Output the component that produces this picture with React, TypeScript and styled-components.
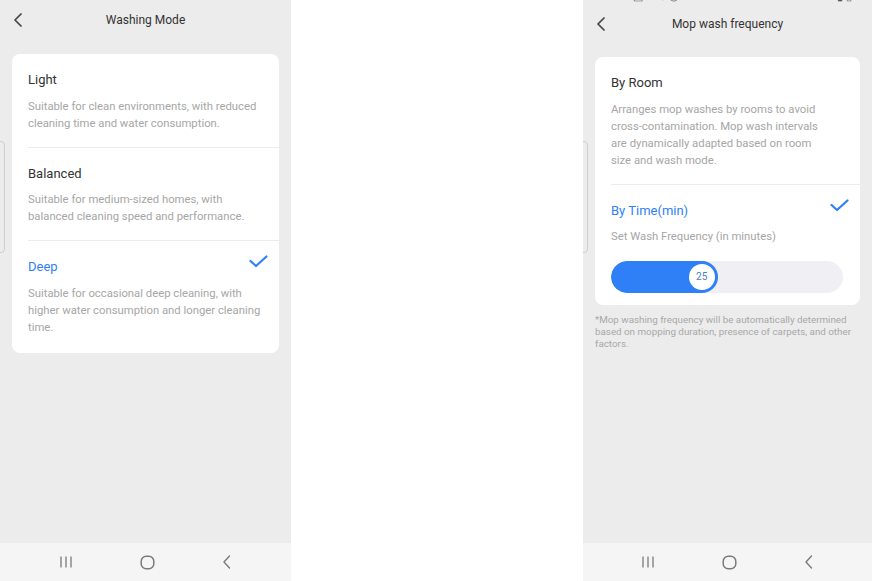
import React from 'react';
import styled, {createGlobalStyle} from 'styled-components';

const GlobalStyle = createGlobalStyle`
  html, body {
    margin: 0;
    padding: 0;
    background: #ffffff;
  }

  body {
    font-family: Roboto, "Noto Sans", "Liberation Sans", sans-serif;
    -webkit-font-smoothing: antialiased;
  }
`

const BLUE = '#2f80f7'

type Option = {
    title: string
    desc: string
    active?: boolean
}

const washingModes: Option[] = [
    {title: 'Light', desc: 'Suitable for clean environments, with reduced cleaning time and water consumption.'},
    {title: 'Balanced', desc: 'Suitable for medium-sized homes, with balanced cleaning speed and performance.'},
    {
        title: 'Deep',
        desc: 'Suitable for occasional deep cleaning, with higher water consumption and longer cleaning time.',
        active: true
    },
]

const BackIcon = () => (
    <svg width="10" height="14" viewBox="0 0 10 14">
        <path d="M8 1 L2 7 L8 13" fill="none" stroke="#444" strokeWidth="1.7" strokeLinecap="round"
              strokeLinejoin="round"/>
    </svg>
)

const CheckIcon = () => (
    <svg width="19" height="13" viewBox="0 0 19 13">
        <path d="M1.5 6 L7 11 L17.5 1.5" fill="none" stroke={BLUE} strokeWidth="2.2" strokeLinecap="round"
              strokeLinejoin="round"/>
    </svg>
)

const NavBar = () => (
    <StyledNav>
        <svg width="14" height="12" viewBox="0 0 14 12">
            <path d="M2 0.5 V11.5 M7 0.5 V11.5 M12 0.5 V11.5" stroke="#7a7a7a" strokeWidth="1.3"/>
        </svg>
        <svg width="15" height="15" viewBox="0 0 15 15">
            <rect x="1.2" y="1.2" width="12.6" height="12.6" rx="5" fill="none" stroke="#7a7a7a"
                  strokeWidth="1.5"/>
        </svg>
        <svg width="10" height="14" viewBox="0 0 10 14">
            <path d="M7.5 1 L2 7 L7.5 13" fill="none" stroke="#7a7a7a" strokeWidth="1.4" strokeLinecap="round"
                  strokeLinejoin="round"/>
        </svg>
    </StyledNav>
)

const Header = ({title}: { title: string }) => (
    <StyledHeader>
        <BackBtn><BackIcon/></BackBtn>
        <HeaderTitle>{title}</HeaderTitle>
    </StyledHeader>
)

const WashingModeScreen = () => (
    <Screen>
        <EdgeMark/>
        <Header title="Washing Mode"/>
        <Body gap={14}>
            <Card>
                {washingModes.map((m, i) => (
                    <Item key={m.title} last={i === washingModes.length - 1} end={16}>
                        <ItemHead>
                            <ItemTitle active={m.active}>{m.title}</ItemTitle>
                            {m.active && <CheckWrap><CheckIcon/></CheckWrap>}
                        </ItemHead>
                        <Desc>{m.desc}</Desc>
                    </Item>
                ))}
            </Card>
        </Body>
        <NavBar/>
    </Screen>
)

const MopFrequencyScreen = () => {
    const value = 25
    const percent = 46

    return (
        <Screen>
            <EdgeMark/>
            <StatusBar>
                <span>12:27 ▣ ✉ ✆ ◎</span>
                <span>⊿ ▮ ▯</span>
            </StatusBar>
            <Header title="Mop wash frequency"/>
            <Body gap={13}>
                <Card>
                    <Item>
                        <ItemHead>
                            <ItemTitle>By Room</ItemTitle>
                        </ItemHead>
                        <Desc narrow>Arranges mop washes by rooms to avoid cross-contamination. Mop wash intervals
                            are dynamically adapted based on room size and wash mode.</Desc>
                    </Item>
                    <Item last end={11}>
                        <ItemHead>
                            <ItemTitle active>By Time(min)</ItemTitle>
                            <CheckWrap><CheckIcon/></CheckWrap>
                        </ItemHead>
                        <Desc>Set Wash Frequency (in minutes)</Desc>
                        <Track>
                            <Fill style={{width: `${percent}%`}}>
                                <Thumb>{value}</Thumb>
                            </Fill>
                        </Track>
                    </Item>
                </Card>
                <Note>*Mop washing frequency will be automatically determined based on mopping duration, presence of
                    carpets, and other factors.</Note>
            </Body>
            <NavBar/>
        </Screen>
    )
}

export default function App() {
    return (
        <>
            <GlobalStyle/>
            <Page>
                <WashingModeScreen/>
                <Gap/>
                <MopFrequencyScreen/>
            </Page>
        </>
    );
}

const Page = styled.div`
  display: grid;
  grid-template-columns: 291px 292px 289px;
  width: 872px;
  height: 581px;
  overflow: hidden;
`

const Gap = styled.div`
  background: #ffffff;
`

const Screen = styled.section`
  position: relative;
  display: flex;
  flex-direction: column;
  height: 581px;
  background: #ececec;
  overflow: hidden;
`

// faint outline of the phone's side button, peeking in at the left edge
const EdgeMark = styled.div`
  position: absolute;
  left: -6px;
  top: 141px;
  width: 9px;
  height: 110px;
  border: 1px solid #cfcfcf;
  border-radius: 4px;
`

const StatusBar = styled.div`
  display: flex;
  justify-content: space-between;
  height: 4px;
  padding: 0 20px;
  overflow: hidden;
  color: #555;
  font-size: 11px;
  line-height: 12px;

  & span {
    margin-top: -9px;
  }
`

const StyledHeader = styled.header`
  position: relative;
  display: flex;
  align-items: center;
  justify-content: center;
  height: 40px;
  flex-shrink: 0;
`

const BackBtn = styled.div`
  position: absolute;
  left: 13px;
  top: 13px;
  display: flex;
`

const HeaderTitle = styled.h1`
  margin: 0;
  font-size: 12px;
  font-weight: 400;
  color: #333;
`

const Body = styled.main<{ gap: number }>`
  flex: 1;
  padding: ${({gap}) => gap}px 12px 0;
`

const Card = styled.div`
  background: #ffffff;
  border-radius: 8px;
  padding-bottom: 1px;
`

const Item = styled.div<{ last?: boolean; end?: number }>`
  margin-left: 16px;
  padding: 16px 17px ${({last, end}) => (last ? `${end ?? 15}px` : '15px')} 0;
  border-bottom: ${({last}) => (last ? 'none' : '1px solid #ececec')};
`

const ItemHead = styled.div`
  display: flex;
  align-items: flex-start;
  justify-content: space-between;
`

const ItemTitle = styled.div<{ active?: boolean }>`
  font-size: 13px;
  line-height: 19px;
  color: ${({active}) => (active ? BLUE : '#333')};
`

const CheckWrap = styled.span`
  display: flex;
  margin: -2px -6px 0 0;
`

const Desc = styled.p<{ narrow?: boolean }>`
  margin: 8.5px 0 0;
  max-width: ${({narrow}) => (narrow ? '212px' : 'none')};
  font-size: 11.3px;
  line-height: 17px;
  color: #a6a6a6;
`

const Track = styled.div`
  margin: 15.5px 0 0;
  height: 32px;
  border-radius: 16px;
  background: #f0f0f4;
  overflow: hidden;
`

const Fill = styled.div`
  position: relative;
  height: 100%;
  border-radius: 16px;
  background: ${BLUE};
`

const Thumb = styled.div`
  position: absolute;
  right: 3px;
  top: 3px;
  width: 26px;
  height: 26px;
  border-radius: 50%;
  background: #ffffff;
  display: flex;
  align-items: center;
  justify-content: center;
  font-size: 10px;
  color: #4a80c8;
`

const Note = styled.p`
  margin: 9px 0 0;
  font-size: 9.8px;
  line-height: 12px;
  color: #a8a8a8;
`

const StyledNav = styled.nav`
  display: flex;
  align-items: center;
  justify-content: center;
  gap: 67px;
  height: 38px;
  flex-shrink: 0;
  background: #f5f5f5;
`
